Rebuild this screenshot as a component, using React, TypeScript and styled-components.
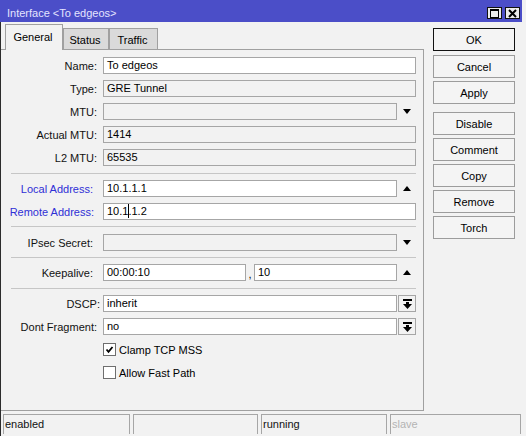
import React from "react";
import styled, { createGlobalStyle } from "styled-components";

const GlobalStyle = createGlobalStyle`
  html, body {
    margin: 0;
    padding: 0;
    background: #f2f2f2;
  }
  body {
    font-family: "Liberation Sans", Arial, sans-serif;
    font-size: 11px;
    color: #000;
  }
  * { box-sizing: border-box; }
`;

const Window = styled.div`
  width: 522px;
  height: 436px;
  display: flex;
  flex-direction: column;
  background: #f2f2f2;
  overflow: hidden;
`;

const TitleBar = styled.div`
  height: 22px;
  flex: none;
  display: flex;
  align-items: center;
  padding: 4px 2px 0 7px;
  background: #4b4ec8;
`;

const TitleText = styled.div`
  flex: 1;
  color: #e4e4ff;
  font-size: 11px;
  line-height: 14px;
  white-space: nowrap;
`;

const TitleButtons = styled.div`
  display: flex;
  gap: 3px;
`;

const TitleButton = styled.div`
  width: 15px;
  height: 12px;
  border: 1px solid #111;
  background: #ececec;
  display: flex;
  align-items: center;
  justify-content: center;
`;

const Body = styled.div`
  flex: 1;
  display: flex;
  flex-direction: column;
  border-left: 1px solid #2c2c2c;
`;

const Main = styled.div`
  display: flex;
  gap: 9px;
`;

const LeftCol = styled.div`
  width: 423px;
  padding-top: 2px;
  display: flex;
  flex-direction: column;
`;

const TabStrip = styled.div`
  height: 25px;
  display: flex;
  align-items: flex-end;
  padding-left: 4px;
`;

const Tab = styled.div<{ $active?: boolean; $w: number }>`
  width: ${(p) => p.$w}px;
  height: ${(p) => (p.$active ? 26 : 21)}px;
  margin-bottom: ${(p) => (p.$active ? -1 : 0)}px;
  position: ${(p) => (p.$active ? "relative" : "static")};
  z-index: ${(p) => (p.$active ? 1 : 0)};
  border: 1px solid #a0a0a0;
  border-bottom: none;
  background: ${(p) => (p.$active ? "#f2f2f2" : "#dadada")};
  display: flex;
  align-items: center;
  justify-content: center;
  padding: ${(p) => (p.$active ? "0 2px 1px 0" : "1px 2px 0 0")};
  font-size: 11px;
`;

const Panel = styled.div`
  height: 362px;
  border: 1px solid #a0a0a0;
  border-left: none;
  display: flex;
  flex-direction: column;
`;

const Section = styled.div<{ $top?: number; $bottom?: number }>`
  display: flex;
  flex-direction: column;
  gap: 6px;
  padding: ${(p) => p.$top ?? 7}px 7px ${(p) => p.$bottom ?? 6}px 0;
`;

const Divider = styled.div`
  height: 1px;
  margin: 0 7px 0 10px;
  background: #c6c6c6;
`;

const FieldRow = styled.div`
  display: grid;
  grid-template-columns: 96px 1fr;
  column-gap: 6px;
  height: 17px;
  align-items: center;
`;

const Label = styled.div<{ $blue?: boolean; $inset?: number }>`
  text-align: right;
  white-space: nowrap;
  margin-right: ${(p) => p.$inset ?? 0}px;
  color: ${(p) => (p.$blue ? "#2f2fd6" : "#111")};
`;

const Control = styled.div`
  display: flex;
  align-items: center;
  height: 17px;
`;

const TextBox = styled.div<{ $editable?: boolean; $w?: number }>`
  ${(p) => (p.$w ? `width: ${p.$w}px; flex: none;` : "flex: 1;")}
  height: 17px;
  border: 1px solid #a6a6a6;
  background: ${(p) => (p.$editable ? "#ffffff" : "#f2f2f2")};
  padding: 0 3px;
  line-height: 15px;
  white-space: nowrap;
  overflow: hidden;
`;

const Caret = styled.span`
  display: inline-block;
  width: 1px;
  height: 14px;
  margin-right: -1px;
  vertical-align: -3px;
  background: #000;
  position: relative;
  z-index: 1;
`;

const ArrowSlot = styled.div`
  width: 19px;
  flex: none;
  display: flex;
  align-items: center;
  justify-content: center;
  padding-left: 1px;
`;

const Comma = styled.div`
  width: 8px;
  flex: none;
  text-align: center;
  align-self: flex-end;
  line-height: 14px;
`;

const DropButton = styled.div`
  width: 18px;
  height: 17px;
  flex: none;
  margin-left: 1px;
  border: 1px solid #a6a6a6;
  background: #f2f2f2;
  display: flex;
  align-items: center;
  justify-content: center;
`;

const CheckWrap = styled.div`
  display: flex;
  align-items: center;
  gap: 3px;
`;

const CheckBox = styled.div`
  width: 13px;
  height: 13px;
  border: 1px solid #6e6e6e;
  background: #fff;
  display: flex;
  align-items: center;
  justify-content: center;
`;

const ButtonCol = styled.div`
  width: 82px;
  padding-top: 6px;
  display: flex;
  flex-direction: column;
  gap: 3px;
`;

const ButtonSpacer = styled.div`
  height: 2px;
`;

const ActionButton = styled.div<{ $default?: boolean }>`
  height: 23px;
  flex: none;
  border: 1px solid ${(p) => (p.$default ? "#111" : "#9c9c9c")};
  margin-bottom: ${(p) => (p.$default ? 1 : 0)}px;
  background: #f4f4f4;
  display: flex;
  align-items: center;
  justify-content: center;
  font-size: 11px;
`;

const StatusBar = styled.div`
  margin-top: 3px;
  padding: 0 1px 0 2px;
  display: grid;
  grid-template-columns: 127px 125px 126px 1fr;
  column-gap: 3px;
`;

const StatusCell = styled.div<{ $muted?: boolean }>`
  height: 20px;
  border: 1px solid #a6a6a6;
  border-bottom: none;
  padding: 2px 0 0 1px;
  line-height: 15px;
  color: ${(p) => (p.$muted ? "#b4b4b4" : "#111")};
`;

const DownTri = () => (
  <svg width="8" height="5" viewBox="0 0 8 5">
    <polygon points="0,0 8,0 4,5" fill="#000" />
  </svg>
);

const UpTri = () => (
  <svg width="8" height="5" viewBox="0 0 8 5">
    <polygon points="0,5 8,5 4,0" fill="#000" />
  </svg>
);

const DropIcon = () => (
  <svg width="9" height="10" viewBox="0 0 9 10">
    <rect x="0" y="0" width="9" height="2" fill="#000" />
    <rect x="3" y="3" width="3" height="3" fill="#000" />
    <polygon points="0,5 9,5 4.5,10" fill="#000" />
  </svg>
);

const CheckMark = () => (
  <svg width="11" height="11" viewBox="0 0 11 11">
    <polyline points="2.5,5.5 4.5,7.8 8.5,3" fill="none" stroke="#000" strokeWidth="1.8" />
  </svg>
);

const MaxIcon = () => (
  <svg width="9" height="9" viewBox="0 0 9 9">
    <rect x="0.5" y="0.5" width="8" height="8" fill="none" stroke="#000" strokeWidth="1" />
    <rect x="0" y="0" width="9" height="2" fill="#000" />
  </svg>
);

const CloseIcon = () => (
  <svg width="9" height="9" viewBox="0 0 9 9">
    <path d="M1 1 L8 8 M8 1 L1 8" stroke="#000" strokeWidth="2" />
  </svg>
);

type FieldProps = {
  label: string;
  value?: React.ReactNode;
  editable?: boolean;
  blue?: boolean;
  inset?: number;
  arrow?: "up" | "down";
  drop?: boolean;
};

const Field = ({ label, value, editable, blue, inset, arrow, drop }: FieldProps) => (
  <FieldRow>
    <Label $blue={blue} $inset={inset}>
      {label}
    </Label>
    <Control>
      <TextBox $editable={editable}>{value}</TextBox>
      {arrow && <ArrowSlot>{arrow === "up" ? <UpTri /> : <DownTri />}</ArrowSlot>}
      {drop && (
        <DropButton>
          <DropIcon />
        </DropButton>
      )}
    </Control>
  </FieldRow>
);

const CheckField = ({ label, checked }: { label: string; checked?: boolean }) => (
  <FieldRow>
    <span />
    <CheckWrap>
      <CheckBox>{checked && <CheckMark />}</CheckBox>
      <span>{label}</span>
    </CheckWrap>
  </FieldRow>
);

const buttons = ["Disable", "Comment", "Copy", "Remove", "Torch"];

export default function App() {
  return (
    <>
      <GlobalStyle />
      <Window>
        <TitleBar>
          <TitleText>Interface &lt;To edgeos&gt;</TitleText>
          <TitleButtons>
            <TitleButton>
              <MaxIcon />
            </TitleButton>
            <TitleButton>
              <CloseIcon />
            </TitleButton>
          </TitleButtons>
        </TitleBar>
        <Body>
          <Main>
            <LeftCol>
              <TabStrip>
                <Tab $active $w={58}>General</Tab>
                <Tab $w={46}>Status</Tab>
                <Tab $w={49}>Traffic</Tab>
              </TabStrip>
              <Panel>
                <Section $top={7} $bottom={7}>
                  <Field label="Name:" value="To edgeos" editable />
                  <Field label="Type:" value="GRE Tunnel" />
                  <Field label="MTU:" value="" arrow="down" />
                  <Field label="Actual MTU:" value="1414" />
                  <Field label="L2 MTU:" value="65535" />
                </Section>
                <Divider />
                <Section $top={6} $bottom={6}>
                  <Field label="Local Address:" value="10.1.1.1" editable blue inset={4} arrow="up" />
                  <Field
                    label="Remote Address:"
                    value={
                      <>
                        10.1
                        <Caret />
                        .1.2
                      </>
                    }
                    editable
                    blue
                    inset={3}
                  />
                </Section>
                <Divider />
                <Section $top={7} $bottom={6}>
                  <Field label="IPsec Secret:" value="" inset={4} arrow="down" />
                </Section>
                <Divider />
                <Section $top={6} $bottom={7}>
                  <FieldRow>
                    <Label $inset={4}>Keepalive:</Label>
                    <Control>
                      <TextBox $editable $w={143}>00:00:10</TextBox>
                      <Comma>,</Comma>
                      <TextBox $editable>10</TextBox>
                      <ArrowSlot>
                        <UpTri />
                      </ArrowSlot>
                    </Control>
                  </FieldRow>
                </Section>
                <Divider />
                <Section $top={6} $bottom={6}>
                  <Field label="DSCP:" value="inherit" editable drop inset={-3} />
                  <Field label="Dont Fragment:" value="no" editable drop />
                  <CheckField label="Clamp TCP MSS" checked />
                  <CheckField label="Allow Fast Path" />
                </Section>
              </Panel>
            </LeftCol>
            <ButtonCol>
              <ActionButton $default>OK</ActionButton>
              <ActionButton>Cancel</ActionButton>
              <ActionButton>Apply</ActionButton>
              <ButtonSpacer />
              {buttons.map((b) => (
                <ActionButton key={b}>{b}</ActionButton>
              ))}
            </ButtonCol>
          </Main>
          <StatusBar>
            <StatusCell>enabled</StatusCell>
            <StatusCell />
            <StatusCell>running</StatusCell>
            <StatusCell $muted>slave</StatusCell>
          </StatusBar>
        </Body>
      </Window>
    </>
  );
}
